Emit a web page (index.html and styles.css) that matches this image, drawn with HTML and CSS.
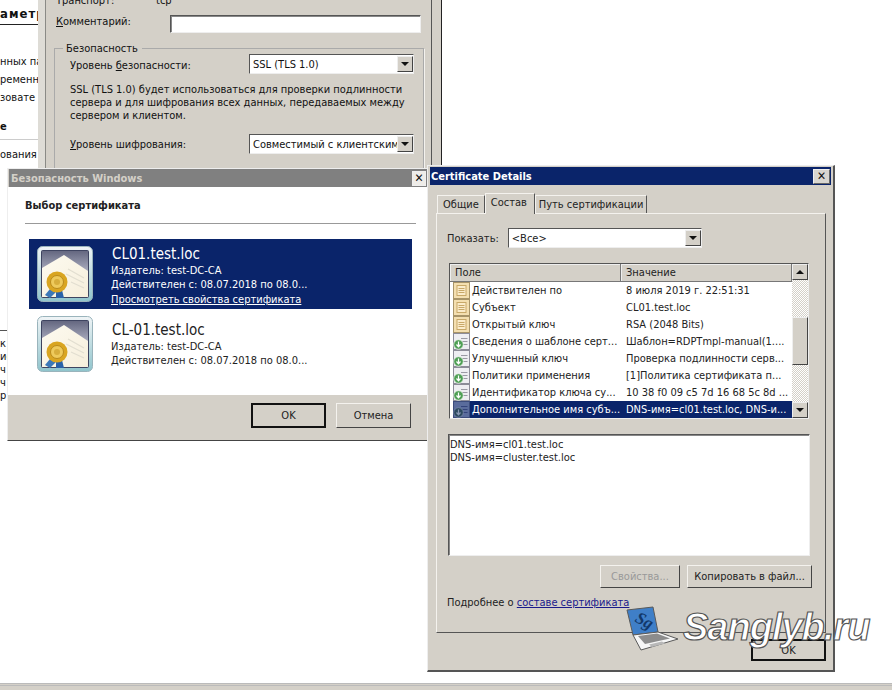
FILE: index.html
```html
<!doctype html>
<html>
<head>
  <title>Certificate Details</title>
  <meta charset="utf-8"/>
  <link rel="stylesheet" href="styles.css">
</head>
<body>
  <svg class="Defs" width="0" height="0">
    <defs>
      <linearGradient id="certFrame" x1="0" y1="0" x2="0" y2="1">
        <stop offset="0" stop-color="#f0f4f6"/>
        <stop offset="1" stop-color="#8fc4cc"/>
      </linearGradient>
      <linearGradient id="certSky" x1="0" y1="0" x2="0" y2="1">
        <stop offset="0" stop-color="#63667f"/>
        <stop offset="0.6" stop-color="#c4c6d6"/>
      </linearGradient>
      <linearGradient id="certPaper" x1="0" y1="0" x2="1" y2="1">
        <stop offset="0" stop-color="#fdfaf0"/>
        <stop offset="1" stop-color="#f6efdc"/>
      </linearGradient>
      <symbol id="cert" viewBox="0 0 56 56">
        <rect x="0.5" y="0.5" width="55" height="55" rx="5" fill="url(#certFrame)" stroke="#9ab4bc"/>
        <rect x="4.5" y="4.5" width="47" height="47" rx="1" fill="url(#certSky)" stroke="#3e4460"/>
        <path d="M5 22 L27 9 L51 25 V51 H5 Z" fill="url(#certPaper)"/>
        <path d="M31 23 L47 32 M29 28 L47 37 M34 36 L47 42" stroke="#e2ded0" stroke-width="1.2"/>
        <path d="M13 43 L8 49 L13 52 L19 46 Z" fill="#3c78b8"/>
        <path d="M19 45 L19 52 L27 52 L25 44 Z" fill="#2a62a8"/>
        <circle cx="20" cy="36" r="10.5" fill="#d9a521"/>
        <circle cx="20" cy="36" r="6.5" fill="#eeca5c" stroke="#b98a1c"/>
        <circle cx="20" cy="36" r="3" fill="#d8ae3c"/>
      </symbol>
      <symbol id="fieldPlain" viewBox="0 0 17 17">
        <rect x="0.5" y="0.5" width="16" height="16" fill="#f4dfb0" stroke="#a89468"/>
        <rect x="4" y="3.5" width="9" height="10" fill="#fbeccb" stroke="#c8a868"/>
        <path d="M5.5 6.5 H11.5 M5.5 8.5 H11.5 M5.5 10.5 H11.5" stroke="#c8a868"/>
      </symbol>
      <symbol id="fieldExt" viewBox="0 0 17 17">
        <rect x="0.5" y="0.5" width="16" height="16" fill="#eeeef2" stroke="#8c8c98"/>
        <path d="M8 5.5 H14.5 M9 8.5 H14.5 M10 11.5 H14.5" stroke="#9a9aa4"/>
        <circle cx="5.5" cy="11.5" r="4.8" fill="#4f9f55" stroke="#f4f8f4" stroke-width="0.8"/>
        <path d="M5.5 8.5 V13.5 M3.5 11.5 L5.5 13.8 L7.5 11.5" fill="none" stroke="#fff" stroke-width="1.2"/>
      </symbol>
      <symbol id="fieldExtSelected" viewBox="0 0 17 17">
        <rect x="0.5" y="0.5" width="16" height="16" fill="#5a6c9c" stroke="#3c4c7c"/>
        <path d="M8 5.5 H14.5 M9 8.5 H14.5 M10 11.5 H14.5" stroke="#33437a"/>
        <circle cx="5.5" cy="11.5" r="4.8" fill="#2c4a60" stroke="#7a88aa" stroke-width="0.8"/>
        <path d="M5.5 8.5 V13.5 M3.5 11.5 L5.5 13.8 L7.5 11.5" fill="none" stroke="#8a98b4" stroke-width="1.2"/>
      </symbol>
    </defs>
  </svg>

  <div class="Side Side--top">
    <div class="Side__Heading">аметр</div>
    <div class="Side__Line">нных па</div>
    <div class="Side__Line">ременн</div>
    <div class="Side__Line">зовате</div>
    <div class="Side__Heading Side__Heading--small">е</div>
    <div class="Side__Line">ования</div>
  </div>
  <div class="Side Side--bottom">
    <div class="Side__Line">к</div>
    <div class="Side__Line">ие</div>
    <div class="Side__Line">ч</div>
    <div class="Side__Line">ч</div>
    <div class="Side__Line">р</div>
  </div>

  <div class="Window Props">
    <div class="Props__Row Props__Row--transport">
      <span class="Props__Label">Транспорт:</span>
      <span>tcp</span>
    </div>
    <div class="Props__Row">
      <span class="Props__Label Props__Label--comment"><u>К</u>омментарий:</span>
      <div class="Input Props__Comment"></div>
    </div>
    <fieldset class="Group">
      <legend class="Group__Title">Безопасность</legend>
      <div class="Group__Row Group__Row--first">
        <span class="Group__Label">Уровень <u>б</u>езопасности:</span>
        <div class="Select Group__Select"><span class="Select__Value">SSL (TLS 1.0)</span><span class="Select__Arrow"></span></div>
      </div>
      <p class="Group__Note">SSL (TLS 1.0) будет использоваться для проверки подлинности сервера и для шифрования всех данных, передаваемых между сервером и клиентом.</p>
      <div class="Group__Row">
        <span class="Group__Label Group__Label--cipher"><u>У</u>ровень шифрования:</span>
        <div class="Select Group__Select"><span class="Select__Value">Совместимый с клиентским</span><span class="Select__Arrow"></span></div>
      </div>
    </fieldset>
  </div>
  <div class="BackEdge"></div>

  <div class="Window Picker">
    <div class="Titlebar Titlebar--inactive">
      <span>Безопасность Windows</span>
      <span class="Titlebar__Close">✕</span>
    </div>
    <div class="Picker__Body">
      <div class="Picker__Heading">Выбор сертификата</div>
      <div class="Cert Cert--selected">
        <svg class="Cert__Icon"><use href="#cert"/></svg>
        <div class="Cert__Text">
          <div class="Cert__Name">CL01.test.loc</div>
          <div>Издатель: test-DC-CA</div>
          <div>Действителен с: 08.07.2018 по 08.0...</div>
          <a class="Cert__Link">Просмотреть свойства сертификата</a>
        </div>
      </div>
      <div class="Cert">
        <svg class="Cert__Icon"><use href="#cert"/></svg>
        <div class="Cert__Text Cert__Text--lower">
          <div class="Cert__Name">CL-01.test.loc</div>
          <div>Издатель: test-DC-CA</div>
          <div>Действителен с: 08.07.2018 по 08.0...</div>
        </div>
      </div>
    </div>
    <div class="Picker__Footer">
      <button class="Button Button--default Picker__Button">OK</button>
      <button class="Button Picker__Button">Отмена</button>
    </div>
  </div>

  <div class="Window Details">
    <div class="Titlebar">
      <span>Certificate Details</span>
      <span class="Titlebar__Close">✕</span>
    </div>
    <div class="Tabs">
      <div class="Tabs__Tab">Общие</div>
      <div class="Tabs__Tab Tabs__Tab--active">Состав</div>
      <div class="Tabs__Tab Tabs__Tab--tight">Путь сертификации</div>
    </div>
    <div class="Panel">
      <div class="Panel__Show">
        <span>Показать:</span>
        <div class="Select Panel__Select"><span class="Select__Value">&lt;Все&gt;</span><span class="Select__Arrow"></span></div>
      </div>
      <div class="List">
        <div class="List__Main">
          <div class="List__Head">
            <div class="List__HeadCell List__HeadCell--field">Поле</div>
            <div class="List__HeadCell">Значение</div>
          </div>
          <div class="List__Row"><svg class="List__Icon"><use href="#fieldPlain"/></svg><span class="List__Field">Действителен по</span><span class="List__Value">8 июля 2019 г. 22:51:31</span></div>
          <div class="List__Row"><svg class="List__Icon"><use href="#fieldPlain"/></svg><span class="List__Field">Субъект</span><span class="List__Value">CL01.test.loc</span></div>
          <div class="List__Row"><svg class="List__Icon"><use href="#fieldPlain"/></svg><span class="List__Field">Открытый ключ</span><span class="List__Value">RSA (2048 Bits)</span></div>
          <div class="List__Row"><svg class="List__Icon"><use href="#fieldExt"/></svg><span class="List__Field">Сведения о шаблоне серт...</span><span class="List__Value">Шаблон=RDPTmpl-manual(1....</span></div>
          <div class="List__Row"><svg class="List__Icon"><use href="#fieldExt"/></svg><span class="List__Field">Улучшенный ключ</span><span class="List__Value">Проверка подлинности серв...</span></div>
          <div class="List__Row"><svg class="List__Icon"><use href="#fieldExt"/></svg><span class="List__Field">Политики применения</span><span class="List__Value">[1]Политика сертификата п...</span></div>
          <div class="List__Row"><svg class="List__Icon"><use href="#fieldExt"/></svg><span class="List__Field">Идентификатор ключа су...</span><span class="List__Value">10 38 f0 09 c5 7d 16 68 5c 8d ...</span></div>
          <div class="List__Row List__Row--selected"><svg class="List__Icon"><use href="#fieldExtSelected"/></svg><span class="List__Field">Дополнительное имя субъ...</span><span class="List__Value">DNS-имя=cl01.test.loc, DNS-и...</span></div>
        </div>
        <div class="Scroll">
          <div class="Scroll__Btn"><span class="Scroll__Up"></span></div>
          <div class="Scroll__Track"><div class="Scroll__Thumb"></div></div>
          <div class="Scroll__Btn"><span class="Scroll__Down"></span></div>
        </div>
      </div>
      <div class="Input Detail">
        <div>DNS-имя=cl01.test.loc</div>
        <div>DNS-имя=cluster.test.loc</div>
      </div>
      <div class="Panel__Actions">
        <button class="Button Button--disabled Panel__Props">Свойства...</button>
        <button class="Button Panel__Copy">Копировать в файл...</button>
      </div>
      <div class="Panel__More">Подробнее о <a class="Panel__Link">составе сертификата </a></div>
    </div>
    <div class="Details__Footer">
      <button class="Button Button--default Picker__Button Details__Ok">OK</button>
    </div>
  </div>

  <div class="Mark">
    <svg class="Mark__Laptop" viewBox="0 0 54 46">
      <path d="M1 4 L27 1 L32 26 L7 29 Z" fill="#3f7fc8" stroke="#5a5a5a" stroke-width="1"/>
      <text class="Mark__Logo" x="9" y="19" transform="rotate(28 16 15)">Sg</text>
      <path d="M7 29 L32 26 L52 33 L15 44 Z" fill="#f6f6f6" stroke="#5a5a5a" stroke-width="1"/>
      <path d="M12 30 L31 27.500 L44 32.500 L19 38 Z" fill="#8c8c8c"/>
      <path d="M23 38.500 L36 35.500 L39 37.500 L26 41 Z" fill="#b8b8b8"/>
    </svg>
    <span class="Mark__Text">Sanglyb.ru</span>
  </div>

  <div class="Taskbar"></div>
</body>
</html>
```

FILE: styles.css
```css
html, body {
  height: 100%;
  margin: 0;
  overflow: hidden;
}
body {
  background-color: #fff;
  color: #111;
  font-family: "DejaVu Sans Condensed", "DejaVu Sans", sans-serif;
  font-size: 11px;
  font-stretch: condensed;
  line-height: 13px;
  position: relative;
}
u {
  text-decoration: underline;
}
.Defs {
  position: absolute;
}

/* scraps of the page behind the dialogs */
.Side {
  left: 0;
  overflow: hidden;
  position: absolute;
  white-space: nowrap;
  width: 38px;
}
.Side--top {
  top: 0;
}
.Side--bottom {
  border-top: 1px solid #555;
  padding-top: 6px;
  top: 330px;
  width: 7px;
}
.Side__Heading {
  border-bottom: 1px solid #222;
  font-size: 13px;
  font-weight: bold;
  height: 17px;
  letter-spacing: 1px;
  margin-bottom: 28px;
  padding-top: 7px;
}
.Side__Heading--small {
  border-bottom-color: #ccc;
  font-size: 11px;
  height: 19px;
  letter-spacing: 0;
  margin: 6px 0 6px;
}
.Side__Line {
  height: 18px;
  line-height: 18px;
}
.Side--bottom .Side__Line {
  height: 13px;
  line-height: 13px;
}

/* windows sit on a free canvas */
.Window {
  background-color: #d4d0c8;
  box-sizing: border-box;
  position: absolute;
}
.Props {
  background-image: linear-gradient(to right, #dedcd6 7px, #8a8a86 7px, #8a8a86 8px, transparent 8px);
  height: 190px;
  left: 38px;
  padding: 0 10px 0 18px;
  top: -9px;
  width: 393px;
}
.BackEdge {
  background-color: #d4d0c8;
  border-left: 1px solid #555;
  border-right: 1px solid #222;
  height: 166px;
  left: 431px;
  position: absolute;
  top: 0;
  width: 9px;
}
.Props__Row {
  align-items: center;
  display: flex;
  height: 24px;
}
.Props__Row--transport {
  height: 19px;
}
.Props__Label {
  width: 100px;
}
.Props__Label--comment {
  margin-bottom: 5px;
  width: 114px;
}
.Props__Row + .Props__Row {
  margin-top: 2px;
}
.Input {
  background-color: #fff;
  border: 1px solid;
  border-color: #555 #eee #eee #555;
  box-shadow: inset 1px 1px 0 #888;
  box-sizing: border-box;
}
.Props__Comment {
  height: 18px;
  width: 251px;
}
.Group {
  border: 1px solid #aaa;
  box-shadow: 1px 1px 0 #f4f2ee;
  box-sizing: border-box;
  height: 140px;
  margin: 6px 0 0 -2px;
  padding: 0 9px 0 15px;
  width: 370px;
}
.Group__Title {
  background-color: #d4d0c8;
  margin-left: -7px;
  padding: 0 4px 0 3px;
}
.Group__Row {
  display: flex;
  height: 20px;
  justify-content: space-between;
}
.Group__Row--first {
  margin-top: -1px;
}
.Group__Label {
  align-self: center;
  padding-top: 3px;
}
.Group__Label--cipher {
  padding-top: 1px;
}
.Group__Select {
  width: 165px;
}
.Group__Note {
  height: 39px;
  margin: 9px 0 12px;
  width: 335px;
}
.Select {
  align-items: center;
  background-color: #fff;
  border: 1px solid;
  border-color: #555 #eee #eee #555;
  box-sizing: border-box;
  display: flex;
  height: 20px;
  overflow: hidden;
  padding-left: 3px;
  white-space: nowrap;
}
.Select__Value {
  flex: 1;
  overflow: hidden;
}
.Select__Arrow {
  background-color: #d4d0c8;
  border: 1px solid;
  border-color: #eee #444 #444 #eee;
  box-sizing: border-box;
  flex: none;
  height: 16px;
  position: relative;
  width: 16px;
}
.Select__Arrow:after {
  border-left: 4px solid transparent;
  border-right: 4px solid transparent;
  border-top: 4px solid #111;
  content: "";
  height: 0;
  left: 3px;
  position: absolute;
  top: 5px;
  width: 0;
}

.Titlebar {
  align-items: center;
  background-color: #0a246a;
  color: #fff;
  display: flex;
  font-weight: bold;
  height: 18px;
  justify-content: space-between;
  margin: 1px 2px 0;
  padding: 0 1px;
}
.Titlebar--inactive {
  background-color: #808080;
  color: #d4d0c8;
  margin: 0 0 0 1px;
  padding-left: 2px;
}
.Titlebar__Close {
  background-color: #d8d6d0;
  border: 1px solid;
  border-color: #eee #666 #666 #eee;
  box-sizing: border-box;
  color: #111;
  font-size: 12px;
  font-weight: normal;
  height: 15px;
  line-height: 13px;
  text-align: center;
  width: 17px;
}
.Titlebar--inactive .Titlebar__Close {
  background-color: #eeece8;
  border-color: #eee;
  width: 14px;
}

.Picker {
  border-bottom: 1px solid #444;
  border-left: 1px solid #eee;
  border-right: 1px solid #999;
  border-top: 1px solid #eee;
  display: flex;
  flex-direction: column;
  height: 273px;
  left: 7px;
  top: 168px;
  width: 421px;
}
.Picker__Body {
  background-color: #fff;
  flex: 1;
  padding: 11px 14px 0 21px;
}
.Picker__Heading {
  border-bottom: 1px solid #999;
  color: #222;
  font-size: 11px;
  font-weight: bold;
  height: 25px;
  line-height: 16px;
  margin: 0 -3px 15px -4px;
}
.Cert {
  box-sizing: border-box;
  color: #222;
  display: flex;
  height: 70px;
  padding: 7px 0 0 8px;
  width: 383px;
}
.Cert--selected {
  background-color: #0a246a;
  color: #fff;
}
.Cert__Icon {
  flex: none;
  height: 56px;
  margin-right: 18px;
  width: 56px;
}
.Cert__Text {
  line-height: 14px;
}
.Cert__Text--lower {
  margin-top: 6px;
}
.Cert__Name {
  font-size: 15px;
  height: 18px;
  line-height: 16px;
  padding-left: 1px;
}
.Cert__Link {
  display: block;
  margin-top: 1px;
  text-decoration: underline;
}
.Picker__Footer {
  box-sizing: border-box;
  display: flex;
  flex: none;
  gap: 10px;
  height: 45px;
  justify-content: flex-end;
  padding: 8px 16px 0 0;
}
.Button {
  background-color: #d4d0c8;
  border: 1px solid;
  border-color: #f4f2ee #444 #444 #f4f2ee;
  box-sizing: border-box;
  color: #222;
  font: inherit;
  padding: 0;
}
.Button--default {
  border: 2px solid #111;
}
.Button--disabled {
  color: #999;
}
.Picker__Button {
  height: 25px;
  width: 75px;
}

.Details {
  border-bottom: 2px solid #555;
  border-left: 1px solid #eee;
  border-right: 2px solid #555;
  border-top: 1px solid #eee;
  height: 507px;
  left: 427px;
  top: 165px;
  width: 408px;
}
.Tabs {
  align-items: flex-end;
  display: flex;
  height: 28px;
  padding-left: 9px;
}
.Tabs__Tab {
  background-color: #d4d0c8;
  border: 1px solid;
  border-bottom: 0;
  border-color: #f4f2ee #555 #d4d0c8 #f4f2ee;
  box-sizing: border-box;
  color: #222;
  height: 18px;
  line-height: 18px;
  padding: 0 5px;
}
.Tabs__Tab--active {
  height: 21px;
  margin-bottom: -1px;
  padding: 0 7px 0 5px;
  position: relative;
  z-index: 1;
}
.Tabs__Tab--tight {
  padding: 0 3px;
}
.Panel {
  border: 1px solid;
  border-color: #f4f2ee #555 #555 #f4f2ee;
  box-sizing: border-box;
  color: #222;
  height: 420px;
  margin-left: 8px;
  padding: 14px 13px 0 10px;
  width: 390px;
}
.Panel__Show {
  align-items: center;
  display: flex;
  gap: 9px;
  height: 20px;
}
.Panel__Select {
  width: 194px;
}
.List {
  background-color: #fff;
  border: 1px solid;
  border-color: #555 #eee #eee #555;
  box-sizing: border-box;
  display: flex;
  height: 156px;
  margin: 15px 0 0 2px;
  overflow: hidden;
  width: 360px;
}
.List__Main {
  flex: 1;
  min-width: 0;
}
.List__Head {
  background-color: #d4d0c8;
  display: grid;
  grid-template-columns: 171px 1fr;
  height: 18px;
}
.List__HeadCell {
  border-bottom: 1px solid #777;
  border-right: 1px solid #777;
  box-shadow: inset 1px 1px 0 #eee;
  line-height: 17px;
  padding-left: 5px;
}
.List__Row {
  align-items: center;
  display: flex;
  height: 17px;
  white-space: nowrap;
}
.List__Icon {
  flex: none;
  height: 17px;
  margin-left: 3px;
  width: 17px;
}
.List__Field {
  padding-left: 2px;
  width: 153px;
}
.List__Value {
  flex: 1;
  padding-left: 1px;
}
.List__Row--selected .List__Field,
.List__Row--selected .List__Value {
  background-color: #0a246a;
  color: #fff;
  line-height: 17px;
}
.Scroll {
  display: flex;
  flex: none;
  flex-direction: column;
  width: 16px;
}
.Scroll__Btn {
  align-items: center;
  background-color: #d4d0c8;
  border: 1px solid;
  border-color: #eee #444 #444 #eee;
  box-sizing: border-box;
  display: flex;
  flex: none;
  height: 16px;
  justify-content: center;
}
.Scroll__Up {
  border-bottom: 4px solid #111;
  border-left: 4px solid transparent;
  border-right: 4px solid transparent;
  height: 0;
  width: 0;
}
.Scroll__Down {
  border-left: 4px solid transparent;
  border-right: 4px solid transparent;
  border-top: 4px solid #111;
  height: 0;
  width: 0;
}
.Scroll__Track {
  background-color: #ecebe6;
  background-image: repeating-conic-gradient(#d4d0c8 0 25%, #fff 0 50%);
  background-size: 2px 2px;
  flex: 1;
  padding-top: 37px;
}
.Scroll__Thumb {
  background-color: #d4d0c8;
  border: 1px solid;
  border-color: #eee #444 #444 #eee;
  box-sizing: border-box;
  height: 48px;
}
.Detail {
  height: 122px;
  margin: 15px 0 0 1px;
  padding: 3px 0 0 1px;
  width: 362px;
}
.Panel__Actions {
  display: flex;
  gap: 7px;
  justify-content: flex-end;
  margin-top: 9px;
}
.Panel__Props {
  height: 23px;
  width: 80px;
}
.Panel__Copy {
  height: 23px;
  width: 125px;
}
.Panel__More {
  color: #222;
  margin-top: 8px;
}
.Panel__Link {
  color: #1a1a8c;
  text-decoration: underline;
}
.Details__Footer {
  display: flex;
  justify-content: flex-end;
  padding: 6px 7px 0 0;
}
.Details__Ok {
  height: 22px;
}

/* watermark lies over the dialog */
.Mark {
  align-items: center;
  display: flex;
  gap: 3px;
  left: 626px;
  position: absolute;
  top: 606px;
}
.Mark__Laptop {
  height: 46px;
  width: 54px;
}
.Mark__Logo {
  fill: #12386a;
  font-family: "Liberation Serif", serif;
  font-size: 17px;
  font-style: italic;
  font-weight: bold;
}
.Mark__Text {
  -webkit-text-stroke: 1.2px #555;
  color: #fff;
  font-family: "Liberation Sans", sans-serif;
  font-size: 38px;
  font-stretch: normal;
  font-style: italic;
  font-weight: bold;
  letter-spacing: -1px;
  line-height: 40px;
  margin-top: -4px;
}

.Taskbar {
  background-color: #d4d0c8;
  border-top: 3px double #bbb;
  bottom: 0;
  height: 4px;
  left: 0;
  position: absolute;
  right: 0;
}
```
